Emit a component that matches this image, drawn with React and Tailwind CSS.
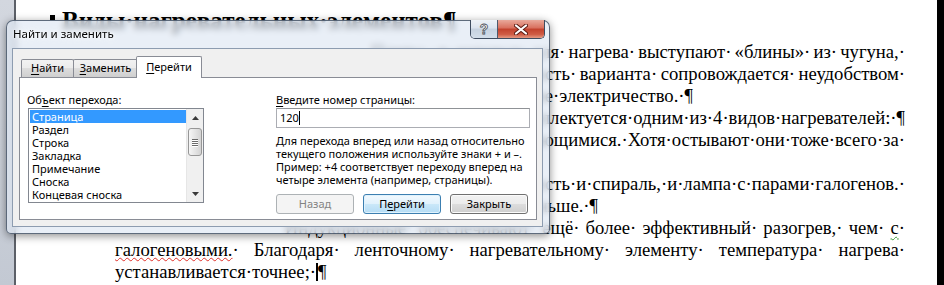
import React from "react";

const ui = "font-['Noto_Sans','Liberation_Sans',sans-serif]";

function U({ children }) {
  return <span className="underline underline-offset-2">{children}</span>;
}

function Tab({ active, children, className = "" }) {
  return (
    <div
      className={
        active
          ? `h-[22px] border border-b-0 border-[#898c95] bg-white rounded-t-[2px] flex items-center justify-center pb-[1px] ${className}`
          : `h-[18px] mb-px border border-b-0 border-[#898c95] rounded-t-[2px] bg-[linear-gradient(to_bottom,#f2f2f2_0%,#ebebeb_50%,#dddddd_50%,#cfcfcf_100%)] flex items-center justify-center ${className}`
      }
    >
      {children}
    </div>
  );
}

const items = [
  "Страница",
  "Раздел",
  "Строка",
  "Закладка",
  "Примечание",
  "Сноска",
  "Концевая сноска",
];

function ScrollBar() {
  return (
    <div className="w-[17px] flex flex-col bg-[#f0f0f0] border-l border-[#e6e6e6]">
      <div className="h-[17px] flex items-center justify-center">
        <svg width="7" height="4" viewBox="0 0 7 4">
          <polygon points="3.5,0 7,4 0,4" fill="#3a3a3a" />
        </svg>
      </div>
      <div className="mt-[2px] ml-[1px] mr-[1px] h-[28px] rounded-[3px] border border-[#979797] bg-[linear-gradient(to_right,#f6f6f6,#e3e3e3_55%,#d3d3d3)] flex flex-col items-center justify-center gap-[1px]">
        <div className="w-[6px] h-[1px] bg-[#6a6a6a] shadow-[0_1px_0_#fff]" />
        <div className="w-[6px] h-[1px] bg-[#6a6a6a] shadow-[0_1px_0_#fff]" />
        <div className="w-[6px] h-[1px] bg-[#6a6a6a] shadow-[0_1px_0_#fff]" />
        <div className="w-[6px] h-[1px] bg-[#6a6a6a] shadow-[0_1px_0_#fff]" />
      </div>
      <div className="flex-1" />
      <div className="h-[17px] flex items-center justify-center">
        <svg width="7" height="4" viewBox="0 0 7 4">
          <polygon points="0,0 7,0 3.5,4" fill="#3a3a3a" />
        </svg>
      </div>
    </div>
  );
}

function Dialog() {
  return (
    <div
      className={`absolute left-[6px] top-[20px] w-[544px] h-[214px] flex flex-col rounded-t-[7px] rounded-b-[5px] border border-[#3c4a5e]/80 bg-[#dfe8f3]/70 backdrop-blur-[3px] shadow-[0_2px_9px_rgba(0,0,0,0.45)] text-[11px] text-black whitespace-nowrap ${ui}`}
    >
      {/* title bar */}
      <div className="h-[27px] flex justify-between pl-[6px] pr-[4px]">
        <div className="self-center pb-[1px] text-[11.5px] [text-shadow:0_0_6px_#fff,0_0_3px_#fff]">
          Найти и заменить
        </div>
        <div className="-mt-px h-[19px] flex rounded-b-[5px] border border-t-0 border-[#3e4c60] overflow-hidden">
          <div className="w-[27px] flex items-center justify-center bg-[linear-gradient(to_bottom,#eef2f7,#dbe3ee_45%,#c5d1df_50%,#d3deea)] border-r border-[#4c5a6e]">
            <span className="font-['Liberation_Sans',sans-serif] font-bold text-[14px] leading-none text-white [-webkit-text-stroke:0.8px_#4a4f57]">
              ?
            </span>
          </div>
          <div className="w-[46px] flex items-center justify-center bg-[linear-gradient(to_bottom,#e9a99b,#d86f5d_45%,#c2412d_50%,#cf5c45_80%,#e49a84)]">
            <svg width="14" height="11" viewBox="0 0 14 11">
              <path d="M2 1.5 L12 9.5 M12 1.5 L2 9.5" stroke="#5a1a12" strokeWidth="4" strokeLinecap="round" />
              <path d="M2 1.5 L12 9.5 M12 1.5 L2 9.5" stroke="#fff" strokeWidth="2.2" strokeLinecap="round" />
            </svg>
          </div>
        </div>
      </div>

      {/* client area */}
      <div className="ml-[5px] mr-[6px] h-[179px] border border-[#8d9cb0] bg-[#f0f0f0] flex flex-col pl-[6px] pr-[5px] pt-[7px] pb-[6px]">
        <div className="relative z-10 h-[22px] -mb-px flex items-end pl-[2px]">
          <Tab className="w-[53px]">
            <span>
              <U>Н</U>айти
            </span>
          </Tab>
          <Tab className="w-[65px] -ml-px">
            <span>
              <U>З</U>аменить
            </span>
          </Tab>
          <Tab active className="w-[66px] -ml-[2px]">
            <span>
              <U>П</U>ерейти
            </span>
          </Tab>
        </div>

        <div className="flex-1 border border-[#898c95] bg-white flex pl-[8px] pt-[14px]">
          {/* left column */}
          <div className="w-[176px] flex flex-col">
            <div className="h-[15px] leading-[15px] -ml-px">
              Об<U>ъ</U>ект перехода:
            </div>
            <div className="mt-[1px] h-[95px] border border-[#828790] flex">
              <div className="flex-1 pl-[1px] pt-[1px] flex flex-col">
                {items.map((it, i) => (
                  <div
                    key={it}
                    className={
                      i === 0
                        ? "h-[13px] leading-[13px] pl-[2px] bg-[#3399ff] text-white"
                        : "h-[13px] leading-[13px] pl-[2px]"
                    }
                  >
                    {it}
                  </div>
                ))}
              </div>
              <ScrollBar />
            </div>
          </div>

          {/* right column */}
          <div className="ml-[72px] w-[254px] flex flex-col">
            <div className="h-[15px] leading-[15px]">
              <U>В</U>ведите номер страницы:
            </div>
            <div className="mt-[1px] h-[20px] border border-[#abadb3] border-t-[#8f9296] flex items-center pl-[3px]">
              <span>120</span>
              <span className="w-px h-[14px] bg-black" />
            </div>
            <div className="mt-[6px] leading-[13px]">
              <div>Для перехода вперед или назад относительно</div>
              <div>текущего положения используйте знаки + и –.</div>
              <div>Пример: +4 соответствует переходу вперед на</div>
              <div>четыре элемента (например, страницы).</div>
            </div>
            <div className="mt-[8px] flex gap-[9px]">
              <div className="w-[78px] h-[20px] rounded-[3px] border border-[#adb2b5] bg-[#f4f4f4] text-[#838383] flex items-center justify-center">
                Назад
              </div>
              <div className="w-[78px] h-[20px] rounded-[3px] border border-[#3c7fb1] bg-[linear-gradient(to_bottom,#f2f9fe,#e0f1fc_50%,#cbe8f9_50%,#b4dcf5)] shadow-[inset_0_0_0_1px_#dff2fd] flex items-center justify-center">
                <span>
                  П<U>е</U>рейти
                </span>
              </div>
              <div className="w-[78px] h-[20px] rounded-[3px] border border-[#707070] bg-[linear-gradient(to_bottom,#f2f2f2_0%,#ebebeb_50%,#dddddd_50%,#cfcfcf_100%)] shadow-[inset_0_0_0_1px_#fbfbfb] flex items-center justify-center">
                Закрыть
              </div>
            </div>
          </div>
        </div>
      </div>
    </div>
  );
}

function Line({ children, className = "" }) {
  return <div className={`h-[22px] whitespace-nowrap ${className}`}>{children}</div>;
}

export default function App() {
  return (
    <div className="relative w-[944px] h-[285px] overflow-hidden flex bg-white">
      <div className="w-[16px] shrink-0 bg-[linear-gradient(to_bottom,#d3d7df,#c3c9d3)] border-r-2 border-[#5c6068]" />

      <div className="flex-1 pl-[99px] pt-[6px] font-['Liberation_Serif',serif] text-[18.67px] leading-[22px] text-black">
        <div className="w-[790px]">
          <div className="-ml-[65px] h-[30px] leading-[30px] text-[25px] font-bold whitespace-nowrap flex items-center">
            <span className="inline-block w-[5px] h-[5px] bg-black mr-[7px] -mt-[8px]" />
            <span>Виды·нагревательных·элементов¶</span>
          </div>

          <div className="mt-[5px]">
            <Line className="text-right [word-spacing:-1.5px]">
              Плиты,· в· которых· для· нагрева· выступают· «блины»· из· чугуна,·
            </Line>
            <Line className="text-right [word-spacing:-1px]">
              Медленный· нагрев.· Особенность· варианта· сопровождается· неудобством·
            </Line>
            <Line className="text-right pr-[212px]">
              и·затратами·на·лишнее·электричество.·¶
            </Line>
            <Line className="text-right">
              Стеклокерамика·комплектуется·одним·из·4·видов·нагревателей:·¶
            </Line>
            <Line className="text-right">
              Ленточные·—·быстро·нагревающимися.·Хотя·остывают·они·тоже·всего·за·
            </Line>
            <Line>несколько·секунд.·¶</Line>
            <Line className="text-right">
              Галогенные·—·в·них·есть·и·спираль,·и·лампа·с·парами·галогенов.·
            </Line>
            <Line className="text-right pr-[307px]">Время·нагрева·ещё·меньше.·¶</Line>
            <Line className="text-right [word-spacing:1.5px]">
              Индукционные· обеспечивают· ещё· более· эффективный· разогрев,· чем·{" "}
              <span className="underline decoration-wavy decoration-[#3a9a3a] decoration-1 underline-offset-[2px]">
                с
              </span>
              ·
            </Line>
            <Line className="text-justify [text-align-last:justify]">
              <span className="underline decoration-wavy decoration-[#e0302a] decoration-1 underline-offset-[1px]">
                галогеновыми.
              </span>
              · Благодаря· ленточному· нагревательному· элементу· температура· нагрева·
            </Line>
            <Line className="flex items-center">
              <span>устанавливается·точнее;·</span>
              <span className="inline-block w-[2px] h-[18px] bg-black" />
              <span>¶</span>
            </Line>
          </div>
        </div>
      </div>

      <div className="w-[7px] shrink-0 bg-black" />

      <Dialog />
    </div>
  );
}
